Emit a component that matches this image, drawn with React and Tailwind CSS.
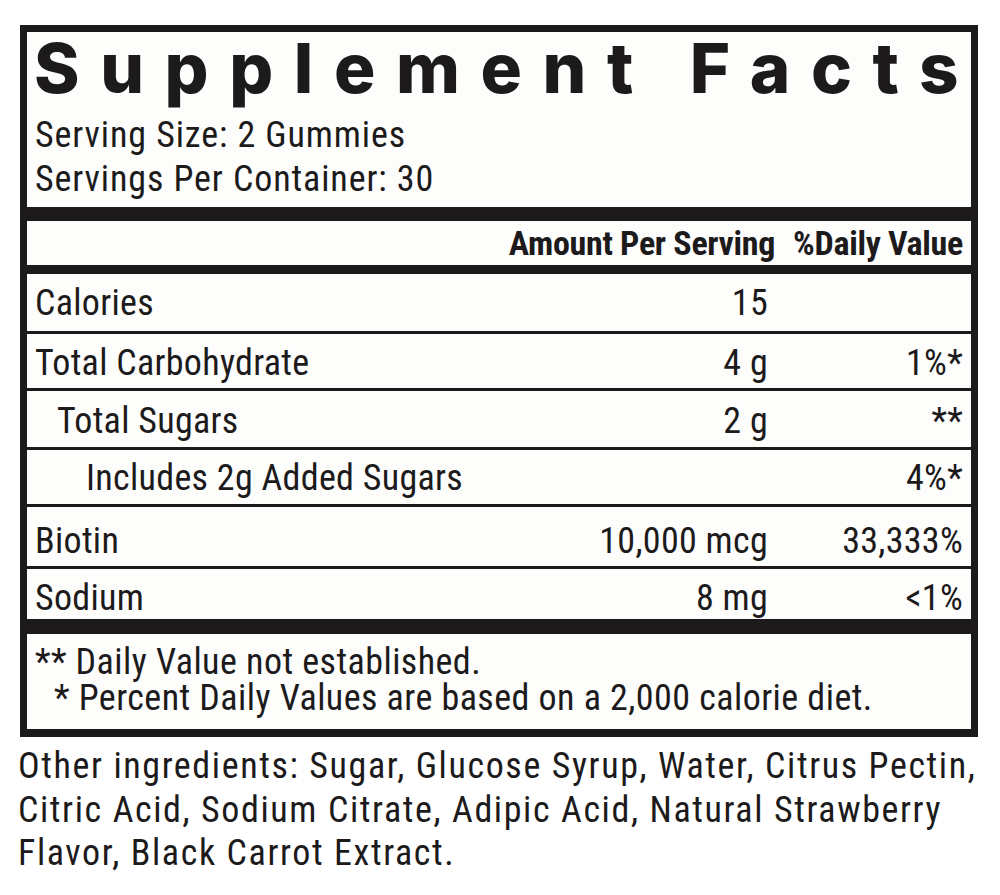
const rows = [
    { name: "Calories", amount: "15", dv: "", h: "h-[60px]", pt: "pt-[11px]", indent: "pl-[8px]" },
    { name: "Total Carbohydrate", amount: "4 g", dv: "1%*", h: "h-[57px]", pt: "pt-[11px]", indent: "pl-[8px]" },
    { name: "Total Sugars", amount: "2 g", dv: "**", h: "h-[59px]", pt: "pt-[12px]", indent: "pl-[30px]" },
    { name: "Includes 2g Added Sugars", amount: "", dv: "4%*", h: "h-[57px]", pt: "pt-[10px]", indent: "pl-[59px]" },
    { name: "Biotin", amount: "10,000 mcg", dv: "33,333%", h: "h-[62px]", pt: "pt-[16px]", indent: "pl-[8px]" },
    { name: "Sodium", amount: "8 mg", dv: "<1%", h: "h-[50px]", pt: "pt-[11px]", indent: "pl-[8px]" },
];

const App = () => {
    return (
        <div className="w-[1000px] h-[895px] bg-white text-[#1c1a1b] font-['Roboto',sans-serif] [font-stretch:75%] overflow-hidden">
            <div className="pt-[25px] pl-[20px]">
                <div className="w-[958px] border-[7px] border-b-[8px] border-[#1c1a1b] bg-[#fdfdfb]">
                    {/* title + serving info */}
                    <div className="pl-[7px] pt-[2px] pb-[6px]">
                        <h1 className="font-['Inter',sans-serif] [font-stretch:100%] font-extrabold text-[69px] leading-[69px] tracking-[20.6px] whitespace-nowrap">Supplement Facts</h1>
                        <div className="mt-[10px] pl-[1px] text-[36px] leading-[44px] tracking-[0.9px]">
                            <p>Serving Size: 2 Gummies</p>
                            <p>Servings Per Container: 30</p>
                        </div>
                    </div>

                    <div className="h-[14px] bg-[#1c1a1b]" />

                    {/* header */}
                    <div className="h-[44px] flex justify-end items-start pr-[8px] font-bold text-[34px] leading-[44px] tracking-[-0.3px]">
                        <span className="mr-[18px]">Amount Per Serving</span>
                        <span>%Daily Value</span>
                    </div>

                    <div className="h-[9px] bg-[#1c1a1b]" />

                    {rows.map((row, i) => (
                        <div key={row.name} className={`${row.h} ${row.pt} ${row.indent} pr-[8px] flex text-[36px] leading-[36px] tracking-[0.3px] ${i < rows.length - 1 ? "border-b-[3px] border-[#1c1a1b]" : ""}`}>
                            <span className="flex-1">{row.name}</span>
                            <span className="text-right">{row.amount}</span>
                            <span className="w-[195px] text-right">{row.dv}</span>
                        </div>
                    ))}

                    <div className="h-[15px] bg-[#1c1a1b]" />

                    {/* footnotes */}
                    <div className="h-[95px] pl-[8px] pt-[10px] text-[36px] leading-[36px] tracking-[0.45px] whitespace-nowrap">
                        <p>** Daily Value not established.</p>
                        <p className="pl-[19px]">* Percent Daily Values are based on a 2,000 calorie diet.</p>
                    </div>
                </div>
            </div>

            <div className="pl-[18px] mt-[8px] text-[36px] leading-[43.5px] tracking-[1.6px] whitespace-nowrap">
                <p>Other ingredients: Sugar, Glucose Syrup, Water, Citrus Pectin,</p>
                <p>Citric Acid, Sodium Citrate, Adipic Acid, Natural Strawberry</p>
                <p>Flavor, Black Carrot Extract.</p>
            </div>
        </div>
    );
};

export default App;
